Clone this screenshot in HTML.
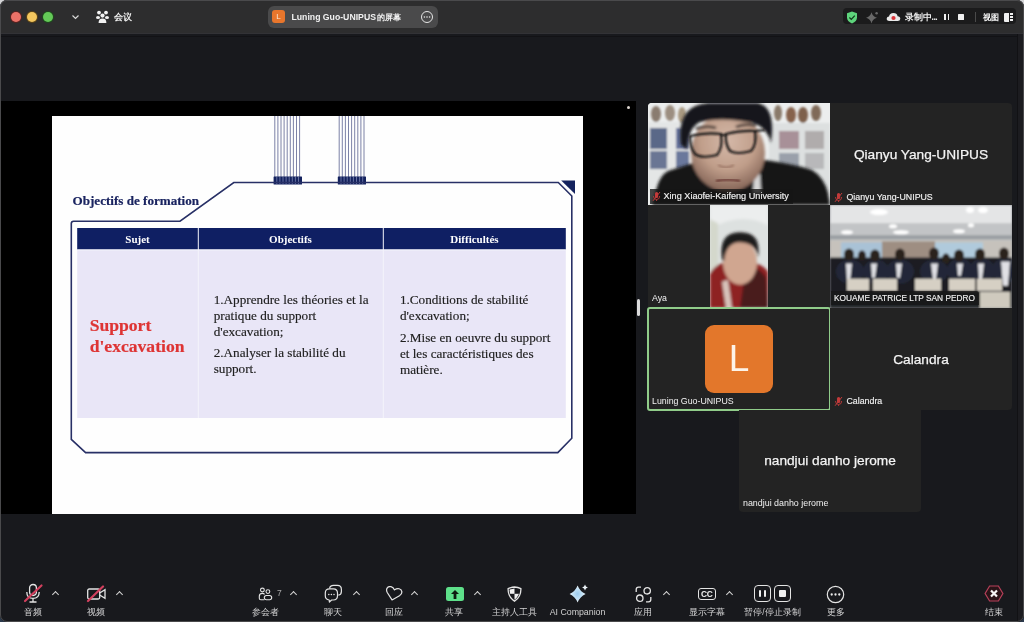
<!DOCTYPE html>
<html><head><meta charset="utf-8">
<style>
*{margin:0;padding:0;box-sizing:border-box}
html,body{width:1024px;height:622px;overflow:hidden;background:linear-gradient(#d4d4d6 0,#d4d4d6 50%,#2c3a4c 50%,#2c3a4c 100%)}
body{font-family:"Liberation Sans",sans-serif;position:relative}
.a{position:absolute}
#win{will-change:transform;position:absolute;left:0;top:0;width:1024px;height:622px;background:#18191d;border-radius:7px;overflow:hidden}
#wborder{position:absolute;left:0;top:0;width:1024px;height:622px;border-radius:7px;border:1px solid #4a4a4c;pointer-events:none}
#title{position:absolute;left:0;top:0;width:1024px;height:34px;background:#2d2d2e;border-bottom:1px solid #323236}
.tl{position:absolute;top:12px;width:10px;height:10px;border-radius:50%}
.serif{font-family:"Liberation Serif",serif}
.tile{position:absolute;width:182px;height:102px;background:#232323;overflow:hidden}
.bigname{position:absolute;left:0;width:182px;text-align:center;color:#f4f4f4;-webkit-text-stroke:.25px #f4f4f4;font-size:13.7px;line-height:16px;top:44px;white-space:nowrap}
.lbl{-webkit-text-stroke:.15px #f0f0f0;position:absolute;left:1px;top:87px;height:14px;padding:0 3px 0 3px;background:rgba(22,22,22,.78);color:#f2f2f2;font-size:8.8px;line-height:14px;white-space:nowrap;border-radius:0 3px 0 0}
.tb{position:absolute;top:604.8px;height:14px;color:#d2d2d3;font-size:8.5px;font-weight:500;line-height:14px;text-align:center;white-space:nowrap;width:80px;margin-left:-40px}
.caret{position:absolute;top:592px;width:5px;height:5px;border-left:1.3px solid #d4d4d4;border-top:1.3px solid #d4d4d4;transform:rotate(45deg)}
.st{position:absolute;color:#202020;-webkit-text-stroke:.15px #202020;font-size:13.2px;line-height:16px;white-space:nowrap;font-family:"Liberation Serif",serif}
</style></head><body>
<div id="win">
  <!-- TITLE BAR -->
  <div id="title">
    <div class="tl" style="left:11.1px;background:#ec7268;box-shadow:0 0 0 1px #5a2220"></div>
    <div class="tl" style="left:27px;background:#f3c65e;box-shadow:0 0 0 1px #5a4418"></div>
    <div class="tl" style="left:42.8px;background:#64c958;box-shadow:0 0 0 1px #1e4a1c"></div>
    <svg class="a" style="left:71px;top:13px" width="9" height="8" viewBox="0 0 9 8"><path d="M1.5 2.5 L4.5 5.5 L7.5 2.5" fill="none" stroke="#d8d8d8" stroke-width="1.2"/></svg>
    <svg class="a" style="left:96px;top:10px" width="13" height="14" viewBox="0 0 13 14">
      <circle cx="3" cy="2.6" r="1.9" fill="#f2f2f2"/><circle cx="10" cy="2.6" r="1.9" fill="#f2f2f2"/>
      <circle cx="6.5" cy="5.6" r="2.1" fill="#f2f2f2"/>
      <ellipse cx="2" cy="7.4" rx="2" ry="1.5" fill="#f2f2f2"/><ellipse cx="11" cy="7.4" rx="2" ry="1.5" fill="#f2f2f2"/>
      <path d="M2.6 13 Q2.6 8.6 6.5 8.6 Q10.4 8.6 10.4 13 Z" fill="#f2f2f2"/>
    </svg>
    <div class="a" style="left:114px;top:10px;color:#f0f0f0;font-size:9px;font-weight:bold;line-height:14px">会议</div>
    <!-- center pill -->
    <div class="a" style="left:268px;top:6px;width:170px;height:22px;border-radius:6px;background:#4a4a4b"></div>
    <div class="a" style="left:272px;top:10px;width:13px;height:13px;border-radius:3px;background:#e8762c;color:#fde8d5;font-size:8px;line-height:13px;text-align:center">L</div>
    <div class="a" style="left:291.5px;top:10px;color:#f2f2f2;font-size:8.7px;font-weight:bold;line-height:14px;white-space:nowrap">Luning Guo-UNIPUS<span style="font-size:8.4px;margin-left:1.5px">的屏幕</span></div>
    <svg class="a" style="left:420px;top:10px" width="14" height="14" viewBox="0 0 14 14"><circle cx="7" cy="7" r="5.5" fill="none" stroke="#e6e6e6" stroke-width="1"/><circle cx="4.4" cy="7" r=".8" fill="#e6e6e6"/><circle cx="7" cy="7" r=".8" fill="#e6e6e6"/><circle cx="9.6" cy="7" r=".8" fill="#e6e6e6"/></svg>
    <!-- right pill -->
    <div class="a" style="left:843px;top:8px;width:173px;height:16px;border-radius:4px;background:#1b1b1c"></div>
    <svg class="a" style="left:846px;top:11px" width="12" height="13" viewBox="0 0 12 13"><path d="M6 .5 L11 2.3 V6.3 Q11 10.5 6 12.5 Q1 10.5 1 6.3 V2.3 Z" fill="#5ed47c"/><path d="M3.4 6.5 L5.3 8.4 L8.8 4.6" fill="none" stroke="#133a1d" stroke-width="1.3"/></svg>
    <svg class="a" style="left:865px;top:11px" width="14" height="13" viewBox="0 0 14 13"><path d="M6.5 1.2 Q7.6 5.6 12 6.8 Q7.6 8 6.5 12.4 Q5.4 8 1 6.8 Q5.4 5.6 6.5 1.2Z" fill="#686868"/><circle cx="11.6" cy="2.2" r="1.2" fill="#686868"/></svg>
    <svg class="a" style="left:886px;top:12px" width="15" height="10" viewBox="0 0 15 10"><path d="M3.2 9 Q0.5 9 0.7 6.6 Q0.9 4.6 3 4.6 Q3.6 1 7.4 1 Q11 1 11.6 4.2 Q14.3 4.4 14.3 6.8 Q14.2 9 11.8 9 Z" fill="#e9e9e9"/><circle cx="7.5" cy="6" r="2.1" fill="#d9343a"/></svg>
    <div class="a" style="left:904.5px;top:10px;color:#f0f0f0;font-size:8.6px;font-weight:bold;line-height:14px;white-space:nowrap">录制中<span style="letter-spacing:-.5px">...</span></div>
    <div class="a" style="left:944.2px;top:14.2px;width:1.7px;height:5.6px;background:#f0f0f0"></div>
    <div class="a" style="left:947.5px;top:14.2px;width:1.7px;height:5.6px;background:#f0f0f0"></div>
    <div class="a" style="left:958.3px;top:14.3px;width:5.5px;height:5.5px;background:#f0f0f0;border-radius:.5px"></div>
    <div class="a" style="left:975px;top:12px;width:1px;height:10px;background:#4a4a4a"></div>
    <div class="a" style="left:983px;top:10px;color:#f0f0f0;font-size:8.3px;font-weight:bold;line-height:14px;white-space:nowrap">视图</div>
    <div class="a" style="left:1004px;top:13px;width:5px;height:8.5px;background:#f0f0f0;border-radius:1px 0 0 1px"></div>
    <div class="a" style="left:1010px;top:13px;width:3px;height:2.3px;background:#f0f0f0"></div>
    <div class="a" style="left:1010px;top:16px;width:3px;height:2.3px;background:#f0f0f0"></div>
    <div class="a" style="left:1010px;top:19px;width:3px;height:2.3px;background:#f0f0f0"></div>
  </div>

  <div class="a" style="left:0;top:36px;width:1024px;height:1px;background:#121215"></div>
  <div class="a" style="left:1017px;top:34px;width:1px;height:588px;background:#111114"></div>
  <div class="a" style="left:1018px;top:34px;width:6px;height:588px;background:#1c1c20"></div>
  <!-- SCREEN SHARE -->
  <div class="a" style="left:0;top:101px;width:636px;height:413px;background:#000"></div>
  <div class="a" style="left:627.2px;top:106.2px;width:3px;height:3px;border-radius:50%;background:#ddd6d0"></div>
  <div class="a" style="left:52px;top:116px;width:531px;height:398px;background:#fefefe"></div>
  <svg class="a" style="left:52px;top:116px" width="531" height="398" viewBox="52 116 531 398">
    <g stroke="#5a6290" stroke-width=".8">
      <line x1="274.8" y1="116" x2="274.8" y2="180"/><line x1="277.9" y1="116" x2="277.9" y2="180"/><line x1="281" y1="116" x2="281" y2="180"/><line x1="284.1" y1="116" x2="284.1" y2="180"/><line x1="287.2" y1="116" x2="287.2" y2="180"/><line x1="290.3" y1="116" x2="290.3" y2="180"/><line x1="293.4" y1="116" x2="293.4" y2="180"/><line x1="296.5" y1="116" x2="296.5" y2="180"/><line x1="299.6" y1="116" x2="299.6" y2="180"/>
      <line x1="339.2" y1="116" x2="339.2" y2="180"/><line x1="342.3" y1="116" x2="342.3" y2="180"/><line x1="345.4" y1="116" x2="345.4" y2="180"/><line x1="348.5" y1="116" x2="348.5" y2="180"/><line x1="351.6" y1="116" x2="351.6" y2="180"/><line x1="354.7" y1="116" x2="354.7" y2="180"/><line x1="357.8" y1="116" x2="357.8" y2="180"/><line x1="360.9" y1="116" x2="360.9" y2="180"/><line x1="364" y1="116" x2="364" y2="180"/>
    </g>
    <g fill="#14225e">
      <rect x="273.6" y="176.4" width="28.4" height="8" rx=".5"/>
      <rect x="337.8" y="176.4" width="28.2" height="8" rx=".5"/>
    </g>
    <g stroke="#8a93c0" stroke-width=".7">
      <line x1="276.8" y1="177" x2="276.8" y2="184"/><line x1="279.9" y1="177" x2="279.9" y2="184"/><line x1="283" y1="177" x2="283" y2="184"/><line x1="286.1" y1="177" x2="286.1" y2="184"/><line x1="289.2" y1="177" x2="289.2" y2="184"/><line x1="292.3" y1="177" x2="292.3" y2="184"/><line x1="295.4" y1="177" x2="295.4" y2="184"/><line x1="298.5" y1="177" x2="298.5" y2="184"/>
      <line x1="341" y1="177" x2="341" y2="184"/><line x1="344.1" y1="177" x2="344.1" y2="184"/><line x1="347.2" y1="177" x2="347.2" y2="184"/><line x1="350.3" y1="177" x2="350.3" y2="184"/><line x1="353.4" y1="177" x2="353.4" y2="184"/><line x1="356.5" y1="177" x2="356.5" y2="184"/><line x1="359.6" y1="177" x2="359.6" y2="184"/><line x1="362.7" y1="177" x2="362.7" y2="184"/>
    </g>
    <path d="M71.3 439.4 V223.5 Q71.3 221.2 73.6 221.2 H180 L233.8 182.5 H558.3 L571.8 196 V438.2 L557.8 452.6 H85.6 Z" fill="none" stroke="#283066" stroke-width="1.6" stroke-linejoin="miter"/>
    <path d="M561.2 180.4 H575 V193.9 Z" fill="#14225e"/>
    <rect x="77.2" y="228" width="488.6" height="21.6" fill="#0f1f63"/>
    <rect x="77.2" y="249.6" width="488.6" height="168.4" fill="#e9e6f7"/>
    <rect x="197.8" y="228" width="1" height="190" fill="#f4f4fb"/>
    <rect x="382.8" y="228" width="1" height="190" fill="#f4f4fb"/>
    <rect x="77.2" y="249.6" width="488.6" height=".9" fill="#f4f4fb"/>
  </svg>
  <div class="a serif" style="left:72.5px;top:193px;color:#1a2460;-webkit-text-stroke:.2px #1a2460;font-size:13.1px;font-weight:bold;line-height:16px;white-space:nowrap">Objectifs de formation</div>
  <div class="a serif" style="left:77px;top:232px;width:121px;text-align:center;color:#fff;font-size:11px;font-weight:bold;line-height:14px">Sujet</div>
  <div class="a serif" style="left:198px;top:232px;width:185px;text-align:center;color:#fff;font-size:11px;font-weight:bold;line-height:14px">Objectifs</div>
  <div class="a serif" style="left:383px;top:232px;width:183px;text-align:center;color:#fff;font-size:11px;font-weight:bold;line-height:14px">Difficultés</div>
  <div class="a serif" style="left:89.7px;top:314.5px;color:#de3434;-webkit-text-stroke:.2px #de3434;font-size:17.6px;font-weight:bold;line-height:21px;white-space:nowrap">Support<br>d'excavation</div>
  <div class="st" style="left:213.7px;top:292px">1.Apprendre les théories et la<br>pratique du support<br>d'excavation;</div>
  <div class="st" style="left:213.7px;top:345px">2.Analyser la stabilité du<br>support.</div>
  <div class="st" style="left:399.9px;top:292px">1.Conditions de stabilité<br>d'excavation;</div>
  <div class="st" style="left:399.9px;top:330px">2.Mise en oeuvre du support<br>et les caractéristiques des<br>matière.</div>

  <!-- GALLERY -->
  <div class="a" style="left:637px;top:299px;width:3px;height:17px;border-radius:1.5px;background:#dcdcdc"></div>
  <div id="t1" class="tile" style="left:648px;top:103px;border-radius:4px 0 0 0;background:#e8eaea">
    <svg class="a" style="left:0;top:0" width="182" height="102" viewBox="0 0 182 102">
      <defs><filter id="bl1" x="-20%" y="-20%" width="140%" height="140%"><feGaussianBlur stdDeviation="1"/></filter>
      <filter id="bl2" x="-20%" y="-20%" width="140%" height="140%"><feGaussianBlur stdDeviation="1.8"/></filter>
      <radialGradient id="fg" cx=".5" cy=".35" r=".62"><stop offset="0" stop-color="#d4b8a8"/><stop offset=".6" stop-color="#c09e8a"/><stop offset="1" stop-color="#8a6a5c"/></radialGradient></defs>
      <rect x="0" y="0" width="182" height="102" fill="#eceeee"/>
      <g filter="url(#bl1)">
      <rect x="0" y="19" width="42" height="70" fill="#e4e6e6"/>
      <rect x="2" y="25" width="17" height="21" fill="#5a6888"/><rect x="28" y="25" width="13" height="21" fill="#62709a"/>
      <rect x="2" y="48" width="17" height="18" fill="#6a7694"/><rect x="28" y="48" width="13" height="18" fill="#6a789c"/>
      <rect x="121" y="20" width="61" height="70" fill="#dde0e0"/>
      <rect x="131" y="28" width="20" height="18" fill="#a89098"/><rect x="157" y="28" width="19" height="18" fill="#b0acac"/>
      <rect x="131" y="50" width="20" height="16" fill="#9aa0aa"/><rect x="157" y="50" width="19" height="16" fill="#b8b8ba"/>
      <ellipse cx="8" cy="11" rx="5" ry="8" fill="#8a7c70"/><ellipse cx="22" cy="10" rx="5" ry="8" fill="#9c8e80"/><ellipse cx="34" cy="12" rx="4" ry="8" fill="#a89880"/>
      <ellipse cx="130" cy="10" rx="4" ry="8" fill="#8a7a6a"/><ellipse cx="143" cy="12" rx="5" ry="8" fill="#86624c"/><ellipse cx="155" cy="12" rx="5" ry="8" fill="#7e604c"/><ellipse cx="168" cy="10" rx="5" ry="8" fill="#806a58"/>
      </g>
      <g filter="url(#bl2)">
      <path d="M4 102 L8 87 Q12 72 20 68 L45 60 L117 57 Q150 62 164 67 Q176 74 180 90 L182 102 Z" fill="#141416"/>
      <path d="M106 72 L112 71 L113 90 L105 90 Z" fill="#d8d8d8"/>
      <ellipse cx="80" cy="50" rx="37" ry="39" fill="url(#fg)"/>
      <path d="M33 42 Q28 2 60 0 L110 0 Q128 4 123 40 Q119 22 100 19 Q72 14 52 19 Q40 25 39 46 Z" fill="#19161a"/>
      <path d="M48 26 Q58 22 68 25 M88 24 Q98 20 108 23" stroke="#2a2220" stroke-width="2.5" fill="none"/>
      </g>
      <g fill="none" stroke="#171314" stroke-width="2.2" filter="url(#bl1)">
        <path d="M42 33 Q58 29 73 31 Q75 45 69 52 Q54 56 47 51 Q42 45 42 33 Z"/><path d="M78 31 Q94 27 107 28 Q109 42 103 48 Q89 52 82 48 Q77 41 78 31 Z"/><path d="M73 32 L78 32 M107 28 L117 27"/>
      </g>
      <path d="M68 78 Q80 75 92 78" stroke="#6a3a36" stroke-width="2.6" fill="none" filter="url(#bl1)"/>
      <path d="M70 62 Q78 67 86 62" stroke="#9a7464" stroke-width="2" fill="none" filter="url(#bl1)"/>
    </svg>
    <div class="lbl" style="left:1.5px;top:86px;height:15px;width:143px;padding-left:14px;font-size:9.15px;line-height:14px">Xing Xiaofei-Kaifeng University</div>
    <svg class="a" style="left:4px;top:88px" width="9" height="11" viewBox="0 0 9 11"><rect x="3" y="1" width="3.2" height="6" rx="1.6" fill="#c23a3a"/><path d="M1.5 5 Q1.5 8.5 4.6 8.5 Q7.7 8.5 7.7 5 M4.6 8.5 V10" stroke="#c23a3a" stroke-width=".9" fill="none"/><path d="M1 9.8 L8 1" stroke="#c23a3a" stroke-width="1"/></svg>
  </div>
  <div id="t2" class="tile" style="left:830px;top:103px;border-radius:0 4px 0 0"><div class="bigname">Qianyu Yang-UNIPUS</div><div class="lbl" style="padding-left:15.5px;width:106px;background:transparent">Qianyu Yang-UNIPUS</div><svg class="a" style="left:4px;top:89px" width="9" height="11" viewBox="0 0 9 11"><rect x="3" y="1" width="3.2" height="6" rx="1.6" fill="#c23a3a"/><path d="M1.5 5 Q1.5 8.5 4.6 8.5 Q7.7 8.5 7.7 5 M4.6 8.5 V10" stroke="#c23a3a" stroke-width=".9" fill="none"/><path d="M1 9.8 L8 1" stroke="#c23a3a" stroke-width="1"/></svg></div>
  <div id="t3" class="tile" style="left:648px;top:205px;height:103px">
    <svg class="a" style="left:62px;top:0" width="58" height="103" viewBox="0 0 58 102" preserveAspectRatio="none">
      <defs><filter id="bl3" x="-30%" y="-30%" width="160%" height="160%"><feGaussianBlur stdDeviation="1.8"/></filter></defs>
      <rect width="58" height="102" fill="#dde1e0"/>
      <g filter="url(#bl3)">
      <path d="M0 0 H58 V20 Q30 6 0 24 Z" fill="#eceeee"/>
      <path d="M0 14 L8 18 L8 64 L0 68 Z" fill="#d4d8cc"/>
      <path d="M0 68 Q4 60 14 57 L44 57 Q54 60 58 66 L58 102 L0 102 Z" fill="#8e2024"/>
      <path d="M36 60 Q50 62 56 72 L58 102 L30 102 Z" fill="#4a1a1c"/>
      <path d="M12 76 L16 102 L22 102 L18 74 Z" fill="#d8c4bc"/>
      <ellipse cx="30" cy="57" rx="17" ry="22" fill="#d0a690"/>
      <path d="M12 54 Q8 27 30 27 Q52 27 48 52 Q46 38 30 37 Q16 37 14 56 Z" fill="#1e1a1a"/>
      </g>
    </svg>
    <div class="a" style="left:4px;top:86px;height:14px;color:#f2f2f2;font-size:8.8px;line-height:14px">Aya</div>
  </div>
  <div id="t4" class="tile" style="left:830px;top:205px;height:103px">
    <svg class="a" style="left:0;top:0" width="182" height="103" viewBox="0 0 182 102" preserveAspectRatio="none">
      <defs><filter id="bl4" x="-10%" y="-10%" width="120%" height="120%"><feGaussianBlur stdDeviation="1.1"/></filter></defs>
      <rect width="182" height="102" fill="#8a8c90"/>
      <g filter="url(#bl4)">
      <rect x="0" y="0" width="182" height="19" fill="#e4e5e6"/>
      <rect x="0" y="18" width="182" height="18" fill="#c2c4c6"/>
      <rect x="0" y="30" width="182" height="4" fill="#9a9ea2"/>
      <rect x="0" y="35" width="182" height="20" fill="#c6c2bc"/>
      <rect x="11" y="37" width="41" height="16" fill="#a9c2d6"/><rect x="105" y="37" width="48" height="16" fill="#b0cadc"/>
      <rect x="52" y="36" width="53" height="18" fill="#9e8e82"/>
      <ellipse cx="49" cy="7" rx="9" ry="3" fill="#fff"/><ellipse cx="140" cy="5" rx="4" ry="3" fill="#fff"/><ellipse cx="153" cy="5" rx="5" ry="3" fill="#fff"/>
      <ellipse cx="17" cy="27" rx="6" ry="2" fill="#fff"/><ellipse cx="71" cy="27" rx="8" ry="2" fill="#fff"/><ellipse cx="129" cy="26" rx="6" ry="2" fill="#fff"/><ellipse cx="63" cy="21" rx="4" ry="2" fill="#fff"/><ellipse cx="141" cy="20" rx="3" ry="2" fill="#fff"/>
      <rect x="0" y="52" width="182" height="50" fill="#1a1c24"/>
      <g fill="#242838">
        <ellipse cx="20" cy="66" rx="14" ry="12"/><ellipse cx="46" cy="66" rx="13" ry="12"/><ellipse cx="70" cy="66" rx="14" ry="12"/><ellipse cx="104" cy="66" rx="14" ry="12"/><ellipse cx="130" cy="65" rx="13" ry="12"/><ellipse cx="152" cy="65" rx="13" ry="12"/><ellipse cx="174" cy="65" rx="12" ry="12"/>
      </g>
      <g fill="#2a221e">
        <ellipse cx="19" cy="49" rx="5" ry="6"/><ellipse cx="32" cy="50" rx="4" ry="5"/><ellipse cx="45" cy="50" rx="5" ry="6"/><ellipse cx="70" cy="49" rx="5" ry="6"/><ellipse cx="104" cy="48" rx="5" ry="6"/><ellipse cx="116" cy="53" rx="4" ry="5"/><ellipse cx="129" cy="50" rx="5" ry="6"/><ellipse cx="150" cy="49" rx="5" ry="6"/><ellipse cx="174" cy="48" rx="5" ry="6"/>
      </g>
      <g fill="#e0e0e4">
        <path d="M16 58 L22 58 L20 76 L17 76 Z"/><path d="M41 58 L47 58 L45 72 L42 72 Z"/><path d="M66 58 L72 58 L70 72 L67 72 Z"/><path d="M101 58 L108 58 L106 74 L103 74 Z"/><path d="M127 58 L133 58 L131 70 L128 70 Z"/><path d="M148 58 L154 58 L152 74 L149 74 Z"/><path d="M171 56 L180 56 L178 80 L173 80 Z"/>
      </g>
      <g fill="#d6d0c4">
        <rect x="17" y="73" width="22" height="12"/><rect x="43" y="73" width="24" height="12"/><rect x="85" y="73" width="26" height="12"/><rect x="119" y="73" width="26" height="12"/><rect x="147" y="73" width="25" height="12"/>
      </g>
      <rect x="0" y="86" width="182" height="16" fill="#22252c"/>
      <rect x="150" y="86" width="30" height="16" fill="#cfcabe"/>
      </g>
    </svg>
    <div class="lbl" style="left:1px;width:148px;font-size:8.3px;top:86px;height:14px">KOUAME PATRICE LTP SAN PEDRO</div>
  </div>
  <div id="t5" class="tile" style="left:648px;top:308px">
    <div class="a" style="left:57px;top:17px;width:68px;height:68px;border-radius:9px;background:#e3772b;color:#fdf3e8;font-size:37px;line-height:68px;text-align:center">L</div>
    <div class="a" style="left:4px;top:86px;height:14px;color:#f2f2f2;font-size:8.8px;line-height:14px;white-space:nowrap">Luning Guo-UNIPUS</div>
    </div>
  <div class="a" style="left:647px;top:307px;width:184px;height:104px;border:2.1px solid #90cc8a;border-radius:3px"></div>
  <div id="t6" class="tile" style="left:830px;top:308px;border-radius:0 0 4px 0"><div class="bigname" style="top:43.5px">Calandra</div><div class="lbl" style="top:86px;padding-left:15.5px;width:57px;background:transparent">Calandra</div><svg class="a" style="left:4px;top:88px" width="9" height="11" viewBox="0 0 9 11"><rect x="3" y="1" width="3.2" height="6" rx="1.6" fill="#c23a3a"/><path d="M1.5 5 Q1.5 8.5 4.6 8.5 Q7.7 8.5 7.7 5 M4.6 8.5 V10" stroke="#c23a3a" stroke-width=".9" fill="none"/><path d="M1 9.8 L8 1" stroke="#c23a3a" stroke-width="1"/></svg></div>
  <div id="t7" class="tile" style="left:739px;top:410px;border-radius:0 0 4px 4px"><div class="bigname" style="top:43px">nandjui danho jerome</div><div class="a" style="left:4px;top:86px;height:14px;color:#f2f2f2;font-size:8.9px;line-height:14px;white-space:nowrap">nandjui danho jerome</div></div>

  <!-- TOOLBAR -->
  <svg class="a" style="left:22px;top:583px" width="22" height="21" viewBox="0 0 22 21">
    <rect x="7.6" y="1.5" width="6.8" height="11" rx="3.4" fill="none" stroke="#e4e4e4" stroke-width="1.3"/>
    <path d="M4.8 9 Q4.8 15.4 11 15.4 Q17.2 15.4 17.2 9 M11 15.4 V19 M7.5 19 H14.5" fill="none" stroke="#e4e4e4" stroke-width="1.3"/>
    <path d="M3 18 L19.5 2.5" stroke="#d2405e" stroke-width="2.2" stroke-linecap="round"/>
  </svg>
  <div class="tb" style="left:33px">音频</div>
  <div class="caret" style="left:53px"></div>
  <svg class="a" style="left:86px;top:585px" width="21" height="18" viewBox="0 0 21 18">
    <rect x="1.7" y="4" width="12" height="10" rx="1.5" fill="none" stroke="#e4e4e4" stroke-width="1.3"/>
    <path d="M13.7 8 L19 4.6 V13.4 L13.7 10" fill="none" stroke="#e4e4e4" stroke-width="1.3"/>
    <path d="M2 16 L17 1.5" stroke="#d2405e" stroke-width="2.2" stroke-linecap="round"/>
  </svg>
  <div class="tb" style="left:96px">视频</div>
  <div class="caret" style="left:117px"></div>

  <svg class="a" style="left:258px;top:587px" width="15" height="14" viewBox="0 0 15 14">
    <circle cx="4.4" cy="3" r="1.9" fill="none" stroke="#e4e4e4" stroke-width="1.1"/>
    <circle cx="9.9" cy="4.6" r="1.9" fill="none" stroke="#e4e4e4" stroke-width="1.1"/>
    <path d="M6.6 7.4 Q5.9 6.4 4.2 6.4 Q1.3 6.4 1.3 9.4 V11.2 Q1.3 12.7 2.8 12.7 H6.4" fill="none" stroke="#e4e4e4" stroke-width="1.1"/>
    <rect x="6.3" y="8.5" width="7.4" height="4.2" rx="2.1" fill="none" stroke="#e4e4e4" stroke-width="1.1"/>
  </svg>
  <div class="a" style="left:277px;top:586.8px;color:#a8a8a8;font-size:8.5px;line-height:12px">7</div>
  <div class="caret" style="left:290.5px"></div>
  <div class="tb" style="left:265px">参会者</div>

  <svg class="a" style="left:324px;top:584px" width="19" height="19" viewBox="0 0 19 19">
    <path d="M5.6 4.6 Q5.8 1.4 9.6 1.4 H13.4 Q17.4 1.4 17.4 5.4 V7.6 Q17.4 10.8 14.4 11.2" fill="none" stroke="#e4e4e4" stroke-width="1.2"/>
    <path d="M5.6 4.8 H9.2 Q13.5 4.8 13.5 9 V11.8 Q13.5 16 9.2 16 H7.6 L5.4 18 L5.2 16 Q1.3 15.6 1.3 11.8 V9 Q1.3 4.8 5.6 4.8 Z" fill="#18191d" stroke="#e4e4e4" stroke-width="1.2" stroke-linejoin="round"/>
    <circle cx="4.8" cy="10.4" r=".75" fill="#e4e4e4"/><circle cx="7.4" cy="10.4" r=".75" fill="#e4e4e4"/><circle cx="10" cy="10.4" r=".75" fill="#e4e4e4"/>
  </svg>
  <div class="caret" style="left:354px"></div>
  <div class="tb" style="left:333px">聊天</div>

  <svg class="a" style="left:384.3px;top:586px" width="19" height="16" viewBox="0 0 20 17">
    <g transform="rotate(14 10 8.5)"><path d="M10 15 L3.4 8.8 Q1.2 6.6 1.9 4.1 Q2.8 1.6 5.5 1.6 Q8.1 1.6 10 4 Q11.9 1.6 14.5 1.6 Q17.2 1.6 18.1 4.1 Q18.8 6.6 16.6 8.8 Z" fill="none" stroke="#e4e4e4" stroke-width="1.3" stroke-linejoin="round"/></g>
  </svg>
  <div class="caret" style="left:411.5px"></div>
  <div class="tb" style="left:393.5px">回应</div>

  <div class="a" style="left:446px;top:586.5px;width:17.5px;height:14.5px;border-radius:2.5px;background:#5ee08a"></div>
  <svg class="a" style="left:446px;top:586.5px" width="18" height="15" viewBox="0 0 18 15"><path d="M9 3 L5 7 H7.6 V12 H10.4 V7 H13 Z" fill="#0e1a10"/></svg>
  <div class="caret" style="left:475px"></div>
  <div class="tb" style="left:454px">共享</div>

  <svg class="a" style="left:507px;top:586px" width="15" height="16" viewBox="0 0 15 16">
    <defs><clipPath id="shc"><path d="M7.5 2.6 Q10.3 2.9 12.5 3.8 Q12.5 10.2 7.5 13.7 Q2.5 10.2 2.5 3.8 Q4.7 2.9 7.5 2.6 Z"/></clipPath></defs>
    <path d="M7.5 1 Q11 1.3 13.9 2.7 Q14.1 10.8 7.5 15.2 Q0.9 10.8 1.1 2.7 Q4 1.3 7.5 1 Z" fill="none" stroke="#e4e4e4" stroke-width="1.3"/>
    <g clip-path="url(#shc)"><rect x="2" y="2" width="5.5" height="5.8" fill="#f0f0f0"/><rect x="7.5" y="7.8" width="6" height="7" fill="#f0f0f0"/></g>
  </svg>
  <div class="tb" style="left:514.5px">主持人工具</div>

  <svg class="a" style="left:568px;top:584px" width="22" height="20" viewBox="0 0 22 20">
    <defs><radialGradient id="aig" cx=".5" cy=".5" r=".5"><stop offset="0" stop-color="#9ccbee"/><stop offset=".6" stop-color="#c4e2f6"/><stop offset="1" stop-color="#f2f8fc"/></radialGradient></defs>
    <path d="M9.6 1.4 Q12 7.4 17.6 9.9 Q12 12.4 9.6 18.4 Q7.2 12.4 1.6 9.9 Q7.2 7.4 9.6 1.4 Z" fill="url(#aig)"/>
    <path d="M17 .6 Q17.5 3 19.9 3.5 Q17.5 4 17 6.4 Q16.5 4 14.1 3.5 Q16.5 3 17 .6 Z" fill="#eef6fb"/>
  </svg>
  <div class="tb" style="left:577.5px;font-size:8.8px;font-weight:normal;color:#d0d0d0">AI Companion</div>

  <svg class="a" style="left:635px;top:585.5px" width="17" height="17" viewBox="0 0 17 17">
    <path d="M1.2 6 V3.5 Q1.2 1.2 3.5 1.2 H6" fill="none" stroke="#e4e4e4" stroke-width="1.3"/>
    <circle cx="12.2" cy="4.8" r="3.2" fill="none" stroke="#e4e4e4" stroke-width="1.3"/>
    <circle cx="4.8" cy="12.2" r="3.2" fill="none" stroke="#e4e4e4" stroke-width="1.3"/>
    <path d="M15.8 11 V13.5 Q15.8 15.8 13.5 15.8 H11" fill="none" stroke="#e4e4e4" stroke-width="1.3"/>
  </svg>
  <div class="caret" style="left:664px"></div>
  <div class="tb" style="left:643px">应用</div>

  <div class="a" style="left:698px;top:587.5px;width:17.5px;height:12.5px;border:1.3px solid #e4e4e4;border-radius:3px;color:#f0f0f0;font-size:8.4px;font-weight:bold;line-height:10px;text-align:center;letter-spacing:-.3px">CC</div>
  <div class="caret" style="left:727px"></div>
  <div class="tb" style="left:706.5px">显示字幕</div>

  <div class="a" style="left:754px;top:585px;width:17px;height:17px;border:1.3px solid #e4e4e4;border-radius:4px"></div>
  <div class="a" style="left:759.2px;top:590.3px;width:2.2px;height:6.4px;background:#f0f0f0;border-radius:1px"></div>
  <div class="a" style="left:763.6px;top:590.3px;width:2.2px;height:6.4px;background:#f0f0f0;border-radius:1px"></div>
  <div class="a" style="left:774px;top:585px;width:17px;height:17px;border:1.3px solid #e4e4e4;border-radius:4px"></div>
  <div class="a" style="left:779.2px;top:590.2px;width:6.6px;height:6.6px;background:#f0f0f0;border-radius:1px"></div>
  <div class="tb" style="left:772.5px">暂停/停止录制</div>

  <svg class="a" style="left:826px;top:584.5px" width="19" height="19" viewBox="0 0 19 19">
    <circle cx="9.5" cy="9.5" r="8.2" fill="none" stroke="#e4e4e4" stroke-width="1.2"/>
    <circle cx="5.7" cy="9.5" r="1.15" fill="#ececec"/><circle cx="9.5" cy="9.5" r="1.15" fill="#ececec"/><circle cx="13.3" cy="9.5" r="1.15" fill="#ececec"/>
  </svg>
  <div class="tb" style="left:835.5px">更多</div>

  <svg class="a" style="left:984px;top:585px" width="20" height="17" viewBox="0 0 20 17">
    <path d="M5.6 1 H14.4 L18.9 8.5 L14.4 16 H5.6 L1.1 8.5 Z" fill="#2a1418" stroke="#b8405a" stroke-width="1.2"/>
    <path d="M7 5.5 L13 11.5 M13 5.5 L7 11.5" stroke="#f4f4f4" stroke-width="2.2"/>
  </svg>
  <div class="tb" style="left:994px">结束</div>
</div>
<div id="wborder"></div>
</body></html>
